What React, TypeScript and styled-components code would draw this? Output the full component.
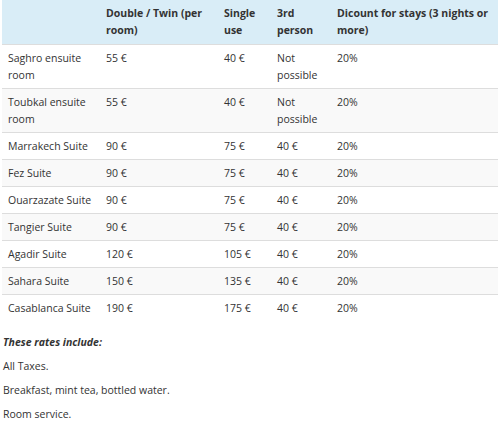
import React from 'react';
import styled, { createGlobalStyle } from 'styled-components';

const GlobalStyle = createGlobalStyle`
    body {
        margin: 0;
        background: #fff;
        font-family: 'Open Sans', 'Liberation Sans', sans-serif;
        font-size: 10.5px;
        color: #333;
    }
`;

interface Rate {
    room: string;
    double: string;
    single: string;
    third: string;
    discount: string;
}

const rates: Array<Rate> = [
    { room: 'Saghro ensuite room', double: '55 €', single: '40 €', third: 'Not possible', discount: '20%' },
    { room: 'Toubkal ensuite room', double: '55 €', single: '40 €', third: 'Not possible', discount: '20%' },
    { room: 'Marrakech Suite', double: '90 €', single: '75 €', third: '40 €', discount: '20%' },
    { room: 'Fez Suite', double: '90 €', single: '75 €', third: '40 €', discount: '20%' },
    { room: 'Ouarzazate Suite', double: '90 €', single: '75 €', third: '40 €', discount: '20%' },
    { room: 'Tangier Suite', double: '90 €', single: '75 €', third: '40 €', discount: '20%' },
    { room: 'Agadir Suite', double: '120 €', single: '105 €', third: '40 €', discount: '20%' },
    { room: 'Sahara Suite', double: '150 €', single: '135 €', third: '40 €', discount: '20%' },
    { room: 'Casablanca Suite', double: '190 €', single: '175 €', third: '40 €', discount: '20%' }
];

const includes = ['All Taxes.', 'Breakfast, mint tea, bottled water.', 'Room service.'];

const App: React.FC = () => (
    <Page>
        <GlobalStyle />
        <RatesTable>
            <colgroup>
                <col style={{ width: 98 }} />
                <col style={{ width: 118 }} />
                <col style={{ width: 53 }} />
                <col style={{ width: 60 }} />
                <col />
            </colgroup>
            <thead>
                <tr>
                    <HeadCell />
                    <HeadCell>Double / Twin (per room)</HeadCell>
                    <HeadCell>Single use</HeadCell>
                    <HeadCell>3rd person</HeadCell>
                    <HeadCell>Dicount for stays (3 nights or more)</HeadCell>
                </tr>
            </thead>
            <tbody>
                {rates.map((r, i) => (
                    <Row key={r.room} striped={i % 2 === 1}>
                        <Cell>{r.room}</Cell>
                        <Cell>{r.double}</Cell>
                        <Cell>{r.single}</Cell>
                        <Cell>{r.third}</Cell>
                        <Cell>{r.discount}</Cell>
                    </Row>
                ))}
            </tbody>
        </RatesTable>
        <Notes>
            <Note>
                <strong>
                    <em>These rates include:</em>
                </strong>
            </Note>
            {includes.map(item => (
                <Note key={item}>{item}</Note>
            ))}
        </Notes>
    </Page>
);

const Page = styled.div`
    padding: 0 2px;
`;

const RatesTable = styled.table`
    width: 496px;
    border-collapse: collapse;
    table-layout: fixed;
    line-height: 17px;
`;

const HeadCell = styled.th`
    background: #d9edf7;
    text-align: left;
    font-weight: 700;
    vertical-align: top;
    padding: 5px 6px;
    color: #333;
`;

const Row = styled.tr<{ striped: boolean }>`
    background: ${p => (p.striped ? '#f9f9f9' : '#fff')};
    border-top: 1px solid #dddddd;
`;

const Cell = styled.td`
    vertical-align: top;
    padding: 5px 6px 4px 6px;
`;

const Notes = styled.div`
    padding: 9px 1px 0;
`;

const Note = styled.p`
    margin: 0;
    line-height: 24px;
`;

export default App;
